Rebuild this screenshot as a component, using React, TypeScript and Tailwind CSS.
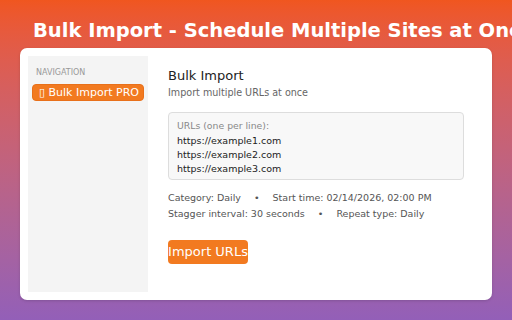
import React from "react";

export default function App() {
  return (
    <div className="w-[512px] h-[320px] overflow-hidden bg-gradient-to-b from-[#f0561f] to-[#935fb8] font-['DejaVu_Sans',sans-serif]">
      <h1 className="pt-[20px] pl-[33px] text-[19.5px] leading-[22px] font-bold text-white whitespace-nowrap">
        Bulk Import - Schedule Multiple Sites at Once
      </h1>
      <div className="mt-[6px] mx-[20px] h-[252px] bg-white rounded-[7px] shadow-[0_1px_3px_rgba(0,0,0,0.15)] p-2 flex">
        <div className="w-[120px] bg-[#f4f4f4] px-1 pt-3">
          <div className="px-1 text-[8px] leading-[10px] text-[#999]">NAVIGATION</div>
          <div className="mt-[6px] h-[17px] rounded-[4px] bg-[#f27a20] border border-[#e8701a] pl-[6px] text-[11px] leading-[15px] text-white whitespace-nowrap">
            ▯ Bulk Import PRO
          </div>
        </div>
        <div className="flex-1 px-5 pt-3">
          <div className="text-[13px] leading-[16px] text-[#222]">Bulk Import</div>
          <div className="mt-[2px] text-[9.6px] leading-[14px] text-[#666]">Import multiple URLs at once</div>
          <div className="mt-3 h-[68px] bg-[#f8f8f8] border border-[#dddddd] rounded-[4px] pl-2 pt-[7px]">
            <div className="text-[9.3px] leading-[12px] text-[#888]">URLs (one per line):</div>
            <div className="mt-[2px] text-[9.5px] leading-[14px] text-[#222]">
              <div>https://example1.com</div>
              <div>https://example2.com</div>
              <div>https://example3.com</div>
            </div>
          </div>
          <div className="mt-[10px] text-[9.5px] leading-[16px] text-[#555] whitespace-nowrap">
            <div>
              Category: Daily<span className="mx-[13px]">•</span>Start time: 02/14/2026, 02:00 PM
            </div>
            <div>
              Stagger interval: 30 seconds<span className="mx-[13px]">•</span>Repeat type: Daily
            </div>
          </div>
          <button className="mt-[18px] h-[24px] w-[80px] rounded-[4px] bg-[#f27a20] text-white text-[13px] leading-[24px] whitespace-nowrap font-['DejaVu_Sans',sans-serif] flex items-center justify-center">
            Import URLs
          </button>
        </div>
      </div>
    </div>
  );
}
